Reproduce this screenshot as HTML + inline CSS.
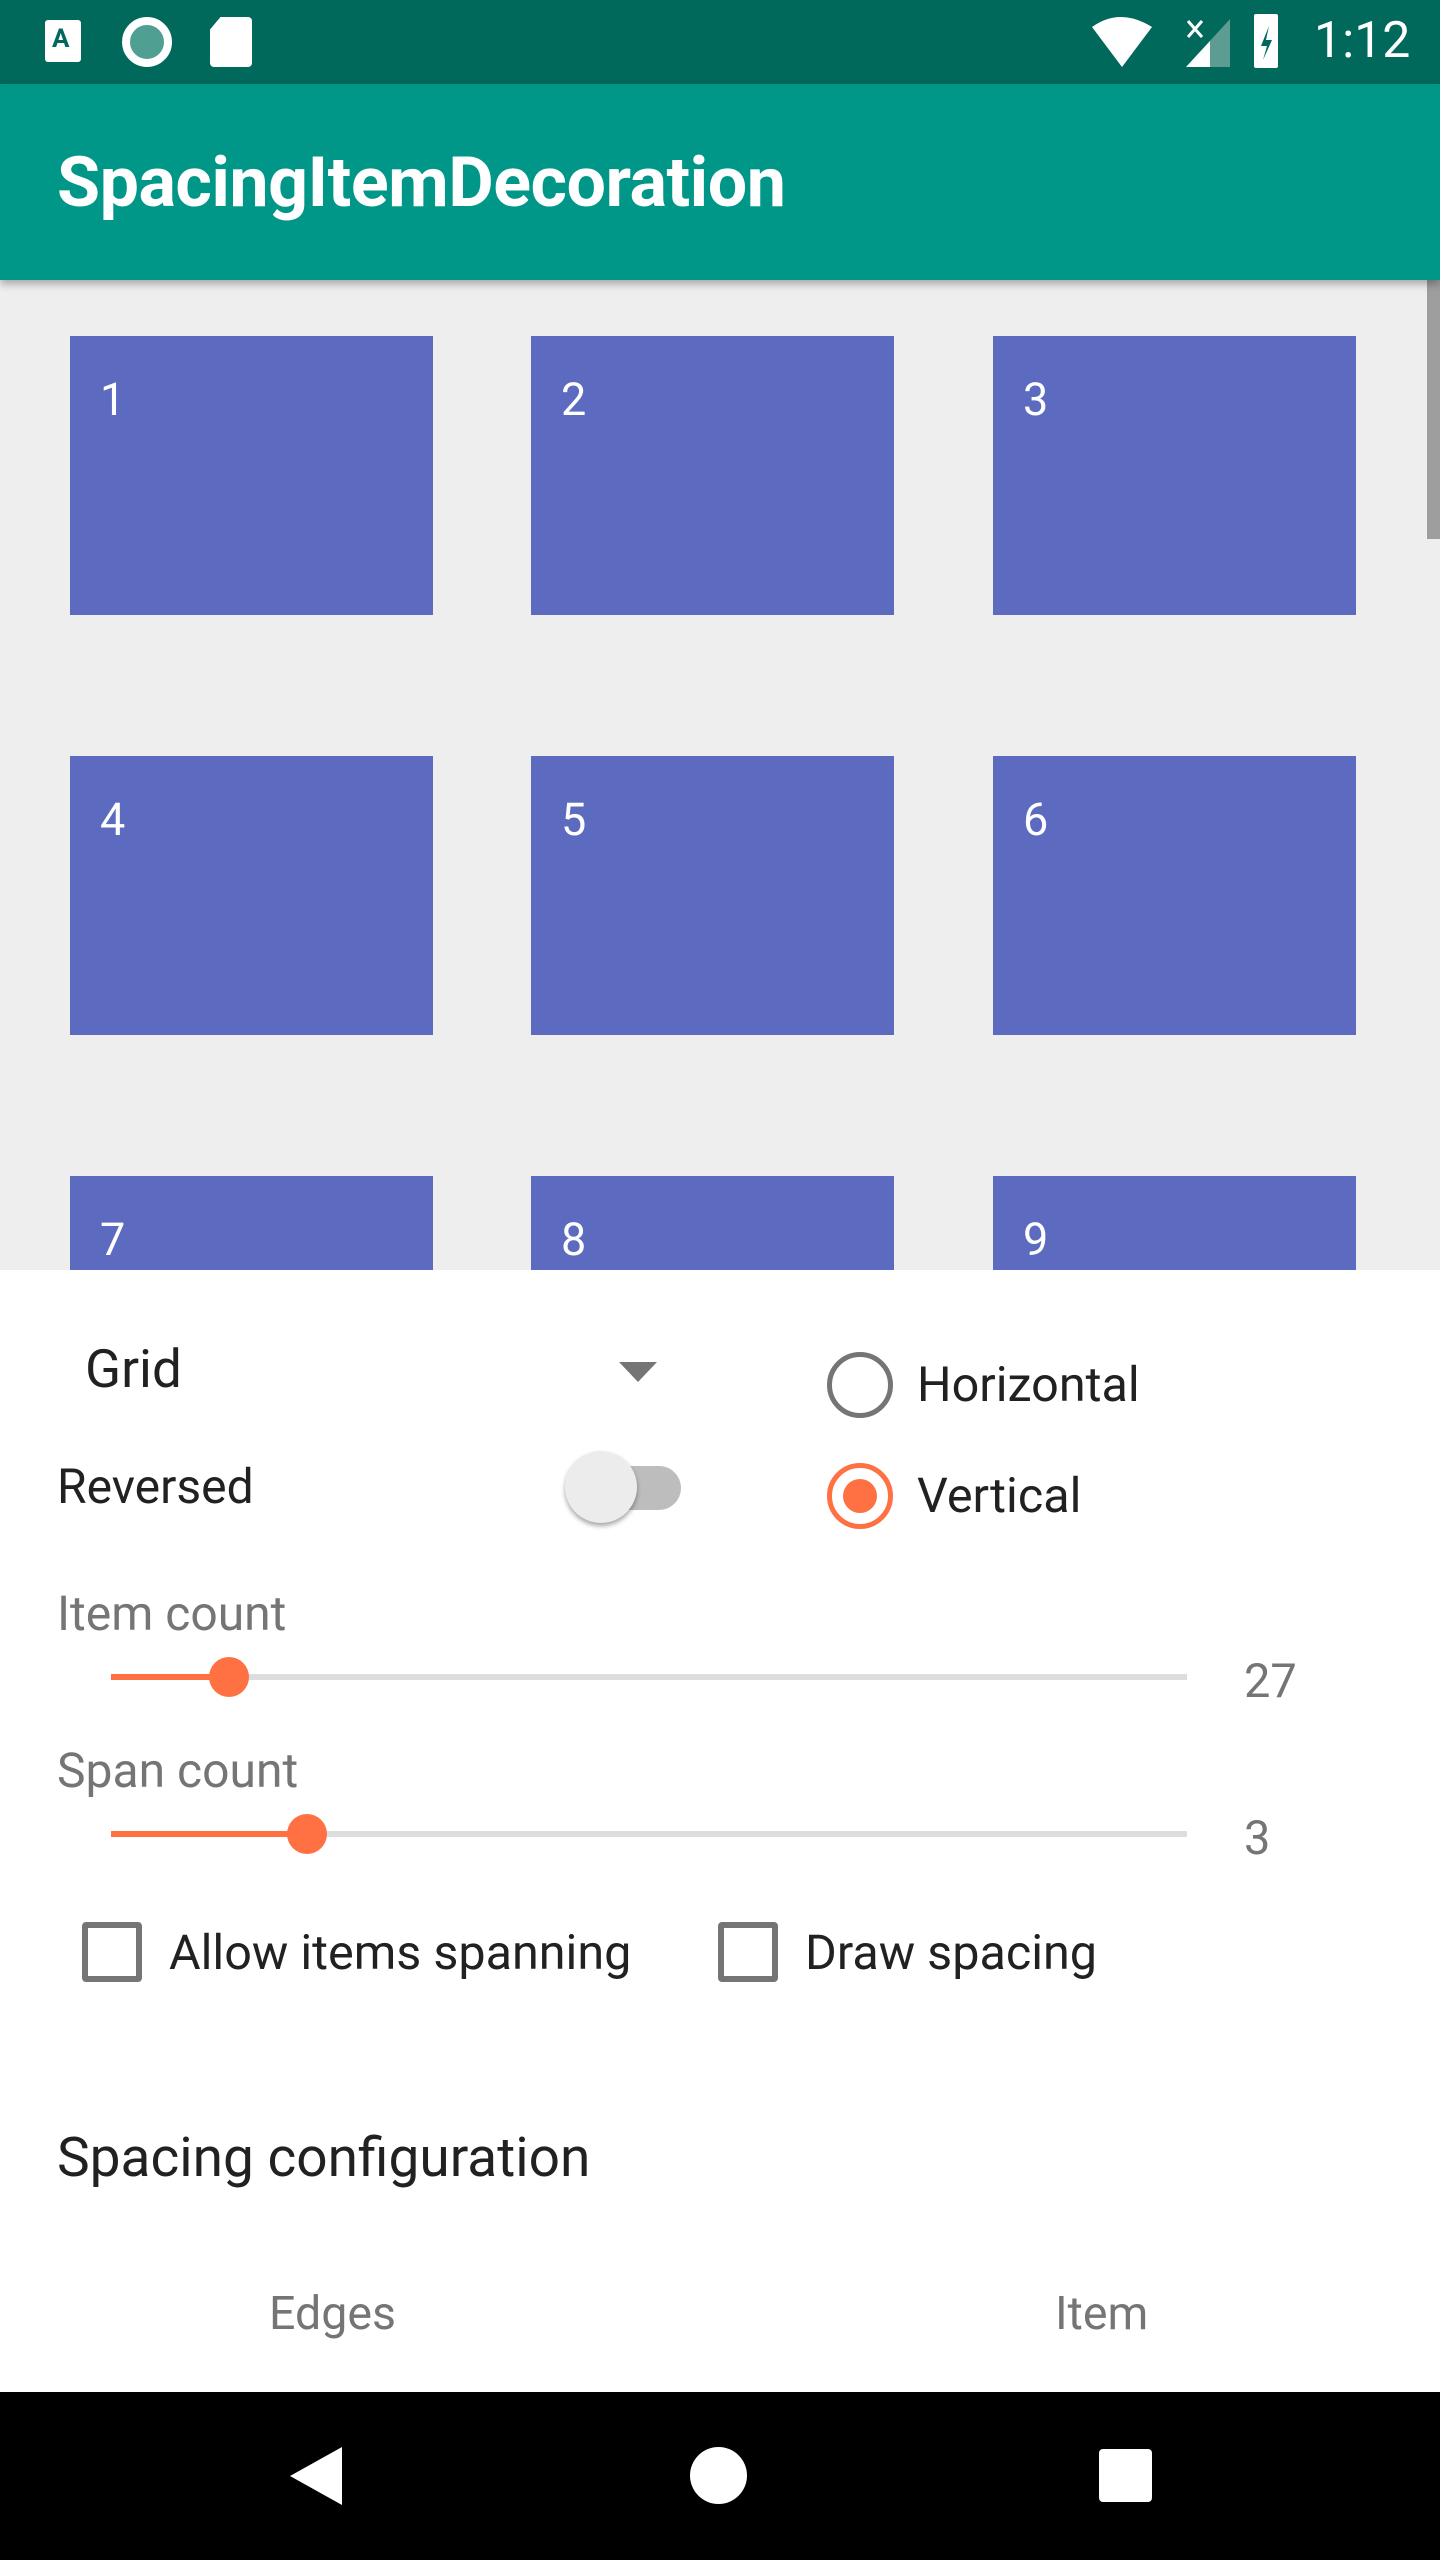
<!DOCTYPE html>
<html><head><meta charset="utf-8"><style>
*{margin:0;padding:0;box-sizing:border-box}
body{width:1440px;height:2560px;position:relative;overflow:hidden;background:#fff;font-family:"Roboto","Liberation Sans",sans-serif}
.a{position:absolute}
.t{position:absolute;white-space:nowrap;line-height:1}
.tile{position:absolute;background:#5c6bc0;width:363px;height:279px}
.tile span{position:absolute;left:30px;top:37px;color:#fff;font-size:45px}
</style></head><body>
<div class="a" style="left:0;top:0;width:1440px;height:84px;background:#00695c"></div>
<div class="a" style="left:45px;top:20px;width:36px;height:42px;background:#fff;border-radius:3px"></div>
<div class="t" style="left:52px;top:26px;font-size:26px;font-weight:bold;color:#00695c">A</div>
<div class="a" style="left:122px;top:17px;width:50px;height:50px;border-radius:50%;border:8px solid #fff;background:#4f9f93"></div>
<div class="a" style="left:210px;top:17px;width:42px;height:50px;background:#fff;border-radius:4px;clip-path:polygon(25% 0,100% 0,100% 100%,0 100%,0 25%)"></div>
<svg class="a" style="left:1090px;top:15px" width="160" height="55"><path d="M2 12 Q30 -8 62 12 L32 52 Z" fill="#fff"/><path d="M96 52 L140 4 L140 52Z" fill="#5c9c92"/><path d="M96 52 L120 26 L120 52Z" fill="#fff"/><path d="M98 6 L112 22 M112 6 L98 22" stroke="#fff" stroke-width="3"/></svg>
<div class="a" style="left:1254px;top:14px;width:24px;height:54px;background:#fff;border-radius:2px"></div>
<svg class="a" style="left:1254px;top:14px" width="24" height="54"><path d="M15 12 L7 32 L13 32 L9 46 L18 26 L12 26 Z" fill="#00695c"/></svg>
<div class="t" style="left:1314px;top:16px;font-size:50px;color:#fff">1:12</div>
<div class="a" style="left:0;top:84px;width:1440px;height:196px;background:#009688;box-shadow:0 4px 8px rgba(0,0,0,.3);z-index:2"></div>
<div class="t" style="left:57px;top:148px;font-size:70px;font-weight:bold;color:#fff;z-index:3;letter-spacing:-0.5px">SpacingItemDecoration</div>
<div class="a" style="left:0;top:280px;width:1440px;height:990px;background:#eeeeee;overflow:hidden">
<div class="tile" style="left:70px;top:56px"><span>1</span></div>
<div class="tile" style="left:531px;top:56px"><span>2</span></div>
<div class="tile" style="left:993px;top:56px"><span>3</span></div>
<div class="tile" style="left:70px;top:476px"><span>4</span></div>
<div class="tile" style="left:531px;top:476px"><span>5</span></div>
<div class="tile" style="left:993px;top:476px"><span>6</span></div>
<div class="tile" style="left:70px;top:896px"><span>7</span></div>
<div class="tile" style="left:531px;top:896px"><span>8</span></div>
<div class="tile" style="left:993px;top:896px"><span>9</span></div>
<div class="a" style="left:1427px;top:0;width:13px;height:259px;background:#9e9e9e"></div>
</div>
<div class="t" style="left:85px;top:1343px;font-size:53px;color:#212121">Grid</div>
<svg class="a" style="left:619px;top:1362px" width="38" height="20"><path d="M0 0 L38 0 L19 20Z" fill="#757575"/></svg>
<div class="a" style="left:827px;top:1352px;width:66px;height:66px;border-radius:50%;border:5px solid #757575"></div>
<div class="t" style="left:917px;top:1361px;font-size:48.5px;color:#212121">Horizontal</div>
<div class="a" style="left:827px;top:1463px;width:66px;height:66px;border-radius:50%;border:5px solid #ff7043"></div>
<div class="a" style="left:843px;top:1479px;width:34px;height:34px;border-radius:50%;background:#ff7043"></div>
<div class="t" style="left:917px;top:1472px;font-size:48.5px;color:#212121">Vertical</div>
<div class="t" style="left:57px;top:1463px;font-size:48px;color:#212121">Reversed</div>
<div class="a" style="left:571px;top:1466px;width:110px;height:44px;border-radius:22px;background:#bdbdbd"></div>
<div class="a" style="left:565px;top:1451px;width:72px;height:72px;border-radius:50%;background:#ececec;box-shadow:0 3px 5px rgba(0,0,0,.35)"></div>
<div class="t" style="left:57px;top:1590px;font-size:48px;color:#757575">Item count</div>
<div class="a" style="left:111px;top:1674px;width:1076px;height:6px;background:#dddddd"></div>
<div class="a" style="left:111px;top:1674px;width:118px;height:6px;background:#ff7043"></div>
<div class="a" style="left:209px;top:1657px;width:40px;height:40px;border-radius:50%;background:#ff7043"></div>
<div class="t" style="left:1244px;top:1658px;font-size:47px;color:#757575">27</div>
<div class="t" style="left:57px;top:1747px;font-size:48px;color:#757575">Span count</div>
<div class="a" style="left:111px;top:1831px;width:1076px;height:6px;background:#dddddd"></div>
<div class="a" style="left:111px;top:1831px;width:196px;height:6px;background:#ff7043"></div>
<div class="a" style="left:287px;top:1814px;width:40px;height:40px;border-radius:50%;background:#ff7043"></div>
<div class="t" style="left:1244px;top:1815px;font-size:47px;color:#757575">3</div>
<div class="a" style="left:82px;top:1922px;width:60px;height:60px;border:6px solid #757575;border-radius:4px"></div>
<div class="t" style="left:169px;top:1929px;font-size:48.5px;color:#212121">Allow items spanning</div>
<div class="a" style="left:718px;top:1922px;width:60px;height:60px;border:6px solid #757575;border-radius:4px"></div>
<div class="t" style="left:805px;top:1929px;font-size:48.5px;color:#212121">Draw spacing</div>
<div class="t" style="left:57px;top:2131px;font-size:55px;color:#212121">Spacing configuration</div>
<div class="t" style="left:269px;top:2291px;font-size:46.5px;color:#757575">Edges</div>
<div class="t" style="left:1055px;top:2291px;font-size:46.5px;color:#757575">Item</div>
<div class="a" style="left:0;top:2392px;width:1440px;height:168px;background:#000"></div>
<svg class="a" style="left:290px;top:2447px" width="52" height="58"><path d="M0 29 L52 0 L52 58Z" fill="#fff"/></svg>
<div class="a" style="left:690px;top:2447px;width:57px;height:57px;border-radius:50%;background:#fff"></div>
<div class="a" style="left:1099px;top:2449px;width:53px;height:53px;border-radius:4px;background:#fff"></div>
</body></html>
